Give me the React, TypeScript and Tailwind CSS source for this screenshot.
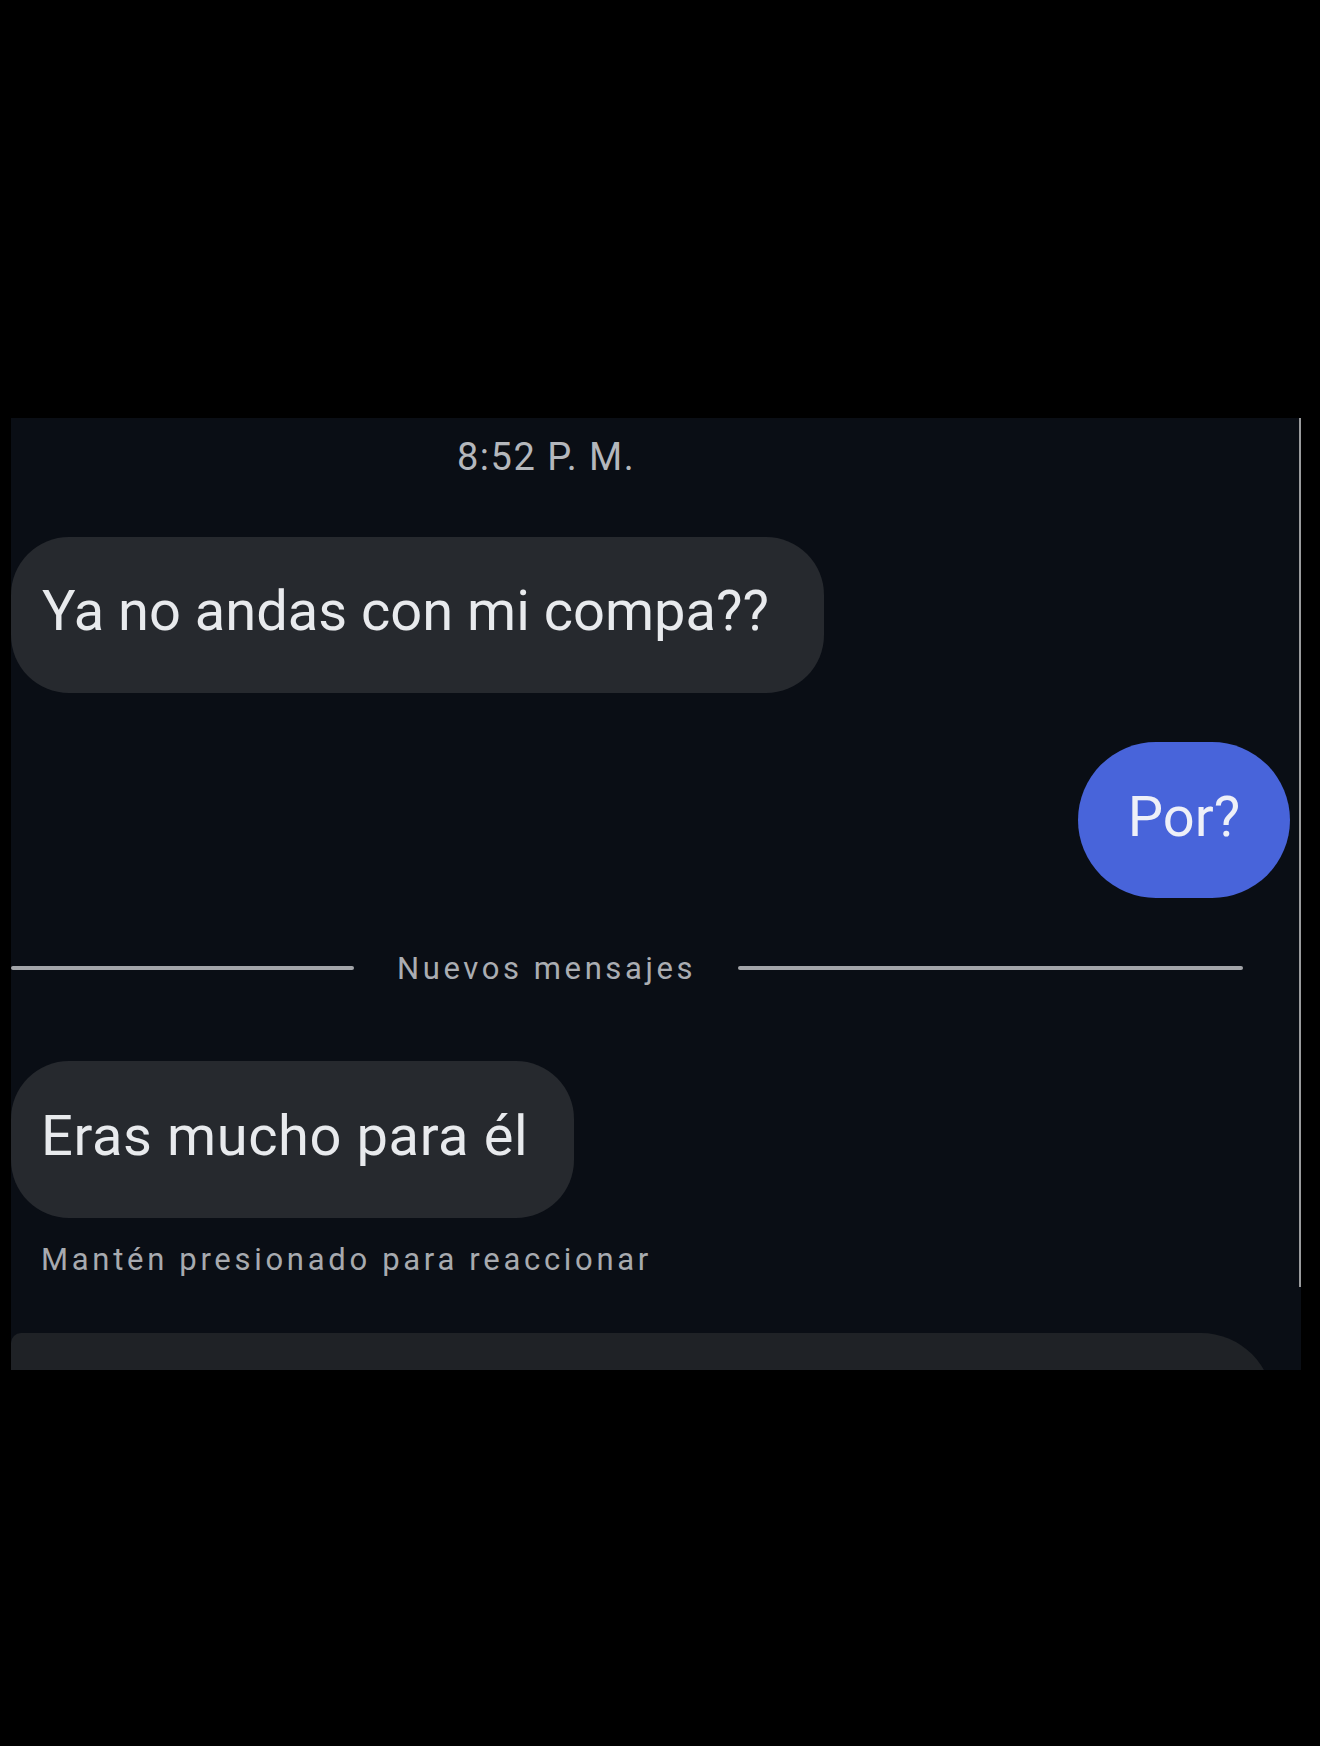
import React from "react";

export default function App() {
  const font = { fontFamily: "Roboto, 'Noto Sans', sans-serif" };
  return (
    <div className="w-[1320px] h-[1746px] bg-black pt-[418px] pl-[11px]" style={font}>
      <div className="w-[1290px] h-[952px] bg-[#0a0e15] flex flex-row overflow-hidden">
        <div className="flex-1 flex flex-col">
          {/* timestamp */}
          <div className="shrink-0 h-[78px] flex items-center pl-[446px]">
            <span className="text-[38px] leading-none text-[#b4b7bc] tracking-[1.5px]">8:52 P. M.</span>
          </div>

          {/* incoming bubble 1 */}
          <div className="shrink-0 mt-[41px] h-[156px] w-[813px] bg-[#26292e] rounded-[58px] flex items-center pl-[31px] pb-[8px]">
            <span className="text-[56px] leading-none text-[#e8eaed] whitespace-nowrap">Ya no andas con mi compa??</span>
          </div>

          {/* outgoing bubble */}
          <div className="shrink-0 mt-[49px] flex justify-end pr-[9px]">
            <div className="h-[156px] w-[212px] bg-[#4864da] rounded-[78px] flex items-center justify-center pb-[6px]">
              <span className="text-[56px] leading-none text-[#eef0f8]">Por?</span>
            </div>
          </div>

          {/* divider */}
          <div className="shrink-0 mt-[50px] h-[40px] flex items-center">
            <div className="w-[343px] h-[4px] bg-[#a3a5a9] rounded-full" />
            <span className="ml-[43px] text-[31px] leading-none text-[#aaadb2] tracking-[3.6px] whitespace-nowrap">Nuevos mensajes</span>
            <div className="ml-[42px] w-[505px] h-[4px] bg-[#a3a5a9] rounded-full" />
          </div>

          {/* incoming bubble 2 */}
          <div className="shrink-0 mt-[73px] h-[157px] w-[563px] bg-[#26292e] rounded-[58px] flex items-center pl-[30px] pb-[7px]">
            <span className="text-[56px] leading-none text-[#e8eaed] whitespace-nowrap tracking-[0.6px]">Eras mucho para él</span>
          </div>

          {/* hint */}
          <div className="shrink-0 mt-[20px] h-[42px] flex items-center pl-[30px]">
            <span className="text-[31px] leading-none text-[#a7aaaf] tracking-[3.7px] whitespace-nowrap">Mantén presionado para reaccionar</span>
          </div>

          {/* partial bubble at bottom */}
          <div className="shrink-0 mt-[53px] h-[100px] w-[1262px] bg-[#1f2226] rounded-tr-[72px] rounded-tl-[10px]" />
        </div>

        {/* right scroll line */}
        <div className="shrink-0 w-[2px] flex flex-col">
          <div className="shrink-0 h-[869px] w-[2px] bg-[#9a9b9d]" />
        </div>
      </div>
    </div>
  );
}
